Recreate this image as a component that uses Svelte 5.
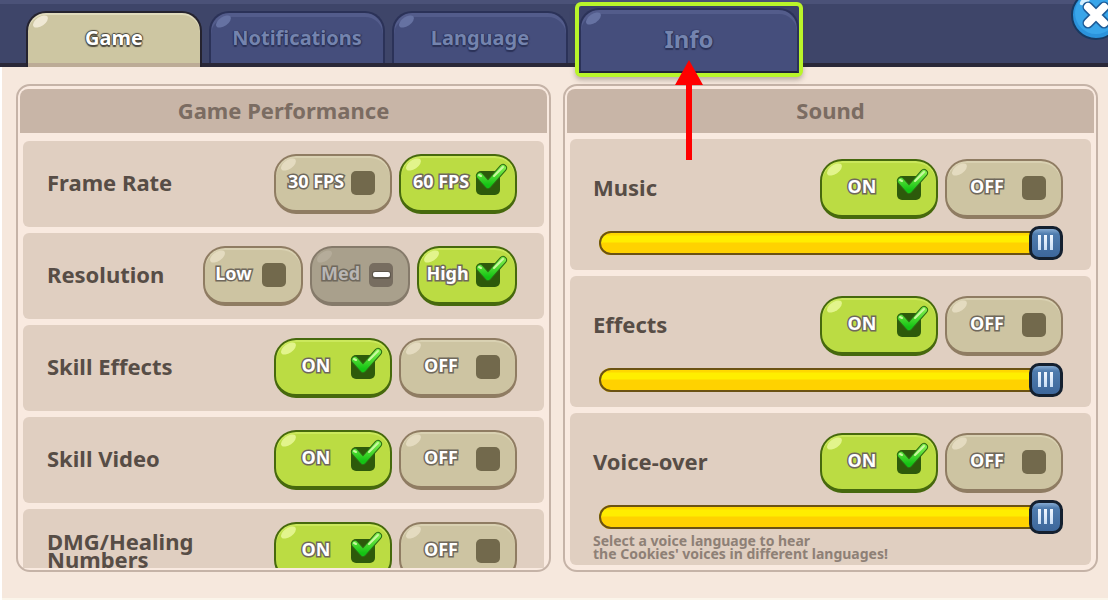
<script lang="ts">
  type Option = { label: string; disabled?: boolean };

  const tabs = ['Game', 'Notifications', 'Language'];
  const onOff: Option[] = [{ label: 'ON' }, { label: 'OFF' }];

  let activeTab = $state('Game');

  let performance = $state([
    { name: 'Frame Rate', value: '60 FPS', options: [{ label: '30 FPS' }, { label: '60 FPS' }] as Option[] },
    {
      name: 'Resolution',
      value: 'High',
      options: [{ label: 'Low' }, { label: 'Med', disabled: true }, { label: 'High' }] as Option[],
    },
    { name: 'Skill Effects', value: 'ON', options: onOff },
    { name: 'Skill Video', value: 'ON', options: onOff },
    { name: 'DMG/Healing Numbers', value: 'ON', options: onOff },
  ]);

  let sound = $state([
    { name: 'Music', value: 'ON', volume: 100, note: [] as string[] },
    { name: 'Effects', value: 'ON', volume: 100, note: [] as string[] },
    {
      name: 'Voice-over',
      value: 'ON',
      volume: 100,
      note: ['Select a voice language to hear', "the Cookies' voices in different languages!"],
    },
  ]);
</script>

{#snippet choices(setting: { name: string; value: string }, options: Option[])}
  <div class="choices" role="radiogroup" aria-label={setting.name}>
    {#each options as option}
      <label
        class="choice"
        class:compact={options.length > 2}
        class:on={setting.value === option.label}
        class:disabled={option.disabled}
      >
        <span class="choice-text">{option.label}</span>
        <span class="box">
          <input
            type="radio"
            name={setting.name}
            value={option.label}
            disabled={option.disabled}
            checked={setting.value === option.label}
            onchange={() => (setting.value = option.label)}
          />
          {#if setting.value === option.label}
            <svg class="mark" viewBox="0 0 36 36" aria-hidden="true">
              <defs>
                <linearGradient id="tick" x1="0" y1="0" x2="0" y2="1">
                  <stop offset="0" stop-color="#7cec4a" />
                  <stop offset="1" stop-color="#14c414" />
                </linearGradient>
              </defs>
              <g fill="none" stroke-linecap="round" stroke-linejoin="round">
                <path d="M6 15 L14 24 L29 7" stroke="#2c6d12" stroke-width="8" />
                <path d="M6 15 L14 24 L29 7" stroke="url(#tick)" stroke-width="6" />
                <path d="M5 14 L7 15 M20 15 L29 6" stroke="#c9f8a0" stroke-width="2" />
              </g>
            </svg>
          {:else if option.disabled}
            <svg class="mark" viewBox="0 0 36 36" aria-hidden="true">
              <rect x="5" y="18" width="19" height="8" rx="3" fill="#5d564b" />
              <rect x="6" y="19" width="17" height="5" rx="2" fill="#fff" />
            </svg>
          {/if}
        </span>
      </label>
    {/each}
  </div>
{/snippet}

<div class="settings">
  <header>
    <nav>
      {#each tabs as tab}
        <button class="tab" class:active={activeTab === tab} type="button" onclick={() => (activeTab = tab)}>
          {tab}
        </button>
      {/each}
      <div class="callout">
        <button class="tab" type="button" onclick={() => (activeTab = 'Info')}>Info</button>
        <svg class="arrow" viewBox="0 0 28 100" aria-hidden="true">
          <path d="M14 0 L28 25 H17 V100 H11 V25 H0 Z" fill="#f00" />
        </svg>
      </div>
    </nav>
    <button class="close" type="button" aria-label="Close">
      <svg viewBox="0 0 50 50" aria-hidden="true">
        <circle cx="25" cy="25" r="24" fill="#2b93dc" stroke="#173a63" stroke-width="2" />
        <circle cx="25" cy="23" r="21" fill="#38a5ea" />
        <ellipse cx="14" cy="11" rx="6" ry="3" fill="#d4f0ff" transform="rotate(-35 14 11)" />
        <path d="M17 17 L33 33 M33 17 L17 33" stroke="#1d5c98" stroke-width="11" stroke-linecap="round" />
        <path d="M17 17 L33 33 M33 17 L17 33" stroke="#fff" stroke-width="8" stroke-linecap="round" />
      </svg>
    </button>
  </header>

  <main>
    <section class="panel">
      <h2>Game Performance</h2>
      <div class="rows">
        {#each performance as setting}
          <div class="row">
            <div class="line">
              <h3>{setting.name}</h3>
              {@render choices(setting, setting.options)}
            </div>
          </div>
        {/each}
      </div>
    </section>

    <section class="panel sound">
      <h2>Sound</h2>
      <div class="rows">
        {#each sound as setting}
          <div class="row">
            <div class="line">
              <h3>{setting.name}</h3>
              {@render choices(setting, onOff)}
            </div>
            <input
              class="volume"
              type="range"
              min="0"
              max="100"
              aria-label={`${setting.name} volume`}
              bind:value={setting.volume}
            />
            {#if setting.note.length}
              <p>
                {#each setting.note as text}
                  <span>{text}</span>
                {/each}
              </p>
            {/if}
          </div>
        {/each}
      </div>
    </section>
  </main>
</div>

<style>
  :global(body) {
    background: #f6e8dd;
  }

  .settings {
    height: 100vh;
    display: flex;
    flex-direction: column;
    position: relative;
    overflow: hidden;
    font-family: 'Noto Sans', 'Open Sans', sans-serif;
    font-weight: 700;
  }

  button,
  input {
    margin: 0;
    font: inherit;
    cursor: pointer;
  }

  header {
    box-sizing: border-box;
    height: 67px;
    flex: none;
    position: relative;
    z-index: 1;
    border-top: 4px solid #4b5278;
    border-bottom: 4px solid #2a2838;
    background: #3e4569;
  }

  nav {
    display: flex;
    align-items: flex-start;
    gap: 7px;
    padding: 7px 80px 0 26px;
  }

  .tab {
    box-sizing: border-box;
    position: relative;
    flex: 0 1 176px;
    min-width: 0;
    height: 52px;
    padding: 0;
    border: 2px solid #2b3258;
    border-bottom: 0;
    border-radius: 20px 20px 0 0;
    color: #7484ae;
    background: #454e7c;
    box-shadow: inset 0 4px #535c8b;
    font-size: 20px;
    line-height: 28px;
    text-shadow: 0 2px 1px #2b3258, 1px 0 1px #2b3258, -1px 0 1px #2b3258;
  }

  .tab::before,
  .choice::before {
    content: '';
    position: absolute;
    top: 4px;
    left: 4px;
    width: 17px;
    height: 9px;
    border-radius: 50%;
    background: #6672a2;
    transform: rotate(-35deg);
  }

  .tab.active {
    height: 56px;
    padding-bottom: 4px;
    border-color: #25232f;
    color: #fff;
    background: linear-gradient(#cdc6a2 50px, #bcab96 50px);
    box-shadow: inset 0 2px #e0dbbd;
    text-shadow: 0 2px 1px #4a463c, 1px 0 1px #4a463c, -1px 0 1px #4a463c, 0 -1px 1px #4a463c;
  }

  .tab.active::before {
    background: #efe8d4;
  }

  .callout {
    box-sizing: border-box;
    position: relative;
    flex: 0 1 228px;
    display: flex;
    height: 75px;
    margin-top: -9px;
    padding-top: 2px;
    border: 4px solid #b9f52a;
    border-radius: 6px;
    background: #3a4168;
    box-shadow: 0 3px 5px rgba(80, 70, 60, 0.35);
  }

  .callout .tab {
    flex: 1;
    height: auto;
    padding-bottom: 4px;
    border-bottom: 2px solid #20223a;
    font-size: 24px;
  }

  .arrow {
    position: absolute;
    top: 54px;
    left: 50%;
    width: 28px;
    height: 100px;
    transform: translateX(-50%);
    pointer-events: none;
  }

  .close {
    position: absolute;
    top: -14px;
    right: -13px;
    width: 50px;
    height: 50px;
    padding: 0;
    border: 0;
    border-radius: 50%;
    background: none;
  }

  .close svg {
    display: block;
  }

  main {
    flex: 1;
    min-height: 0;
    display: grid;
    grid-template-columns: 1fr 1fr;
    grid-template-rows: minmax(0, 1fr);
    gap: 12px;
    padding: 17px 10px 28px 16px;
    box-shadow: inset 2px 0 #fff, inset 0 -2px #fbf5ea;
  }

  .panel {
    min-width: 0;
    display: flex;
    flex-direction: column;
    padding: 3px 2px 2px;
    border: 2px solid #c5b3a7;
    border-radius: 14px;
    background: #f9eae0;
    overflow: hidden;
  }

  h2,
  h3,
  p {
    margin: 0;
  }

  h2 {
    flex: none;
    padding-bottom: 2px;
    border-radius: 8px 8px 0 0;
    color: #7b6c62;
    background: #c8b5a7;
    font-size: 22px;
    line-height: 42px;
    text-align: center;
  }

  .rows {
    flex: 1;
    min-height: 0;
    display: flex;
    flex-direction: column;
    gap: 6px;
    margin-top: 8px;
    padding: 0 3px;
    overflow: hidden;
  }

  .row {
    flex: none;
    padding: 13px 27px 13px 24px;
    border-radius: 6px;
    background: #e0cfc1;
  }

  .line {
    display: flex;
    align-items: center;
    justify-content: space-between;
    gap: 12px;
  }

  h3 {
    padding-bottom: 4px;
    color: #574d46;
    font-size: 22px;
    line-height: 18px;
  }

  .choices {
    flex: none;
    display: flex;
    gap: 7px;
  }

  .choice {
    box-sizing: border-box;
    position: relative;
    display: flex;
    align-items: center;
    width: 118px;
    height: 60px;
    padding: 0 15px 0 5px;
    border: 2px solid #8f7c62;
    border-bottom-width: 4px;
    border-radius: 22px;
    background: #cdc4a2;
    box-shadow: inset 0 2px #d9d1b2;
    cursor: pointer;
  }

  .choice::before {
    background: #e4dbc0;
  }

  .choice.compact {
    width: 100px;
    padding-left: 0;
  }

  .choice.on {
    border-color: #46690d;
    background: #bbdc43;
    box-shadow: inset 0 2px #cbe85c;
  }

  .choice.on::before {
    background: #e2f48c;
  }

  .choice.disabled {
    border-color: #857a6a;
    background: #a9a08c;
    box-shadow: none;
    cursor: default;
  }

  .choice.disabled::before {
    background: #b5ac9a;
  }

  .choice-text {
    flex: 1;
    position: relative;
    padding-bottom: 4px;
    color: #fff;
    font-size: 18px;
    line-height: 24px;
    text-align: center;
    white-space: nowrap;
    -webkit-text-stroke: 3px #6f685c;
    paint-order: stroke fill;
  }

  .disabled .choice-text {
    color: #b9b6b4;
  }

  .box {
    position: relative;
    width: 24px;
    height: 24px;
  }

  .box input {
    display: block;
    width: 24px;
    height: 24px;
    appearance: none;
    border-radius: 5px;
    background: #72694c;
  }

  .on .box input {
    background: #2d5a0b;
  }

  .disabled .box input {
    background: #776d60;
  }

  .mark {
    position: absolute;
    top: -10px;
    left: -2px;
    width: 36px;
    height: 36px;
    pointer-events: none;
  }

  .sound .rows {
    margin-top: 6px;
  }

  .sound .row {
    padding: 20px 28px 10px 23px;
  }

  .sound .row:last-child {
    padding-bottom: 5px;
  }

  .volume {
    appearance: none;
    display: block;
    width: calc(100% - 6px);
    height: 34px;
    margin: 7px 0 0 6px;
    background: none;
  }

  .volume::-webkit-slider-runnable-track {
    height: 24px;
    border-radius: 12px;
    background: linear-gradient(#ffd800 4px, #ffee00 5px, #ffee00 11px, #ffd200 12px);
    box-shadow: inset 0 0 0 2px #6b5212;
  }

  .volume::-webkit-slider-thumb {
    appearance: none;
    box-sizing: border-box;
    width: 34px;
    height: 34px;
    margin-top: -5px;
    border: 3px solid #14202f;
    border-radius: 10px;
    background:
      linear-gradient(#f1f7ff, #c9def5) 6px 6px / 3px 15px no-repeat,
      linear-gradient(#f1f7ff, #c9def5) 12px 6px / 3px 15px no-repeat,
      linear-gradient(#f1f7ff, #c9def5) 18px 6px / 3px 15px no-repeat,
      linear-gradient(#86abd2, #4f7cae 5px, #3d679b);
  }

  p {
    color: #8e8076;
    font-size: 14px;
    line-height: 13px;
  }

  p span {
    display: block;
  }
</style>
